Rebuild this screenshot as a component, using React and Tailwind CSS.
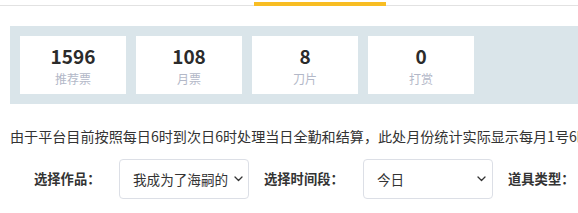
import React from "react";

const Chevron = () => (
  <svg width="9" height="6" viewBox="0 0 9 6" fill="none" className="shrink-0">
    <path d="M1 1l3.5 3.5L8 1" stroke="#333" strokeWidth="1.3" strokeLinecap="round" strokeLinejoin="round" />
  </svg>
);

const stats = [
  { n: "1596", l: "推荐票" },
  { n: "108", l: "月票" },
  { n: "8", l: "刀片" },
  { n: "0", l: "打赏" },
];

export default function App() {
  return (
    <div
      className="w-[578px] h-[213px] overflow-hidden bg-white text-[#333]"
      style={{ fontFamily: '"Noto Sans CJK SC", "Noto Sans", sans-serif' }}
    >
      <div className="relative h-[26px]">
        <div className="pt-[5px]">
          <div className="h-px bg-[#e2e2e2]" />
        </div>
        <div className="absolute left-[254px] top-[2px] h-[4px] w-[132px] bg-[#f8bd23]" />
      </div>

      <div className="ml-[10px] flex h-[78px] items-center gap-[10px] bg-[#dae5ea] pl-[10px]">
        {stats.map((s) => (
          <div
            key={s.l}
            className="flex h-[58px] w-[106px] shrink-0 flex-col items-center bg-white"
          >
            <div className="mt-[8px] text-[19px] font-bold leading-[24px] text-[#2b2b2b]">{s.n}</div>
            <div className="mt-[3px] text-[12px] leading-[16px] text-[#b3b8c8]">{s.l}</div>
          </div>
        ))}
      </div>

      <div className="mt-[22px] whitespace-nowrap pl-[10px] text-[14.1px] leading-[20px] text-[#333]">
        由于平台目前按照每日6时到次日6时处理当日全勤和结算，此处月份统计实际显示每月1号6时到次月1号6时的数据
      </div>

      <div className="mt-[13px] flex items-center whitespace-nowrap pl-[34px]">
        <div className="w-[85px] shrink-0 text-[13.3px] font-bold leading-[20px]">选择作品：</div>
        <div className="flex h-[40px] w-[130px] shrink-0 items-center rounded-[4px] border border-[#dcdfe6] pl-[13px] pr-[5px]">
          <div className="flex-1 overflow-hidden text-[13.6px] leading-[20px]">我成为了海嗣的</div>
          <div className="ml-[3px]"><Chevron /></div>
        </div>
        <div className="ml-[15px] w-[99px] shrink-0 text-[13.3px] font-bold leading-[20px]">选择时间段：</div>
        <div className="flex h-[40px] w-[130px] shrink-0 items-center rounded-[4px] border border-[#dcdfe6] pl-[13px] pr-[6px]">
          <div className="flex-1 overflow-hidden text-[13.6px] leading-[20px]">今日</div>
          <Chevron />
        </div>
        <div className="ml-[15px] shrink-0 text-[13.3px] font-bold leading-[20px]">道具类型：</div>
      </div>
    </div>
  );
}
